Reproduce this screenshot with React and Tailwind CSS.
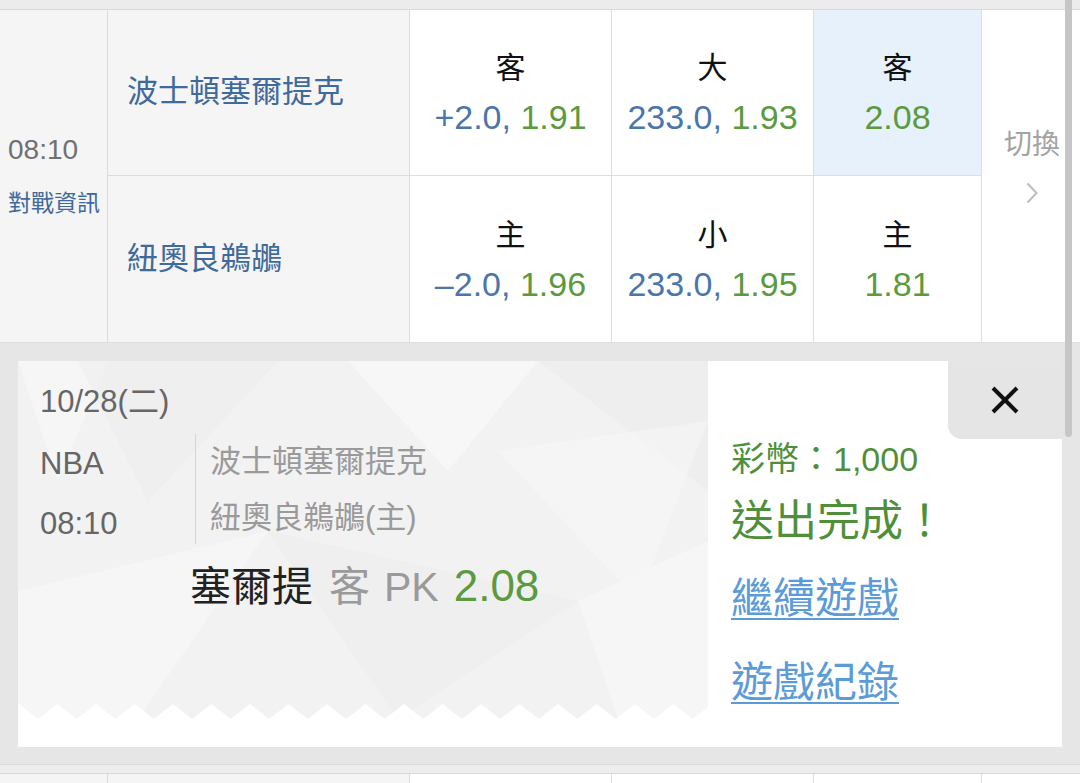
import React from 'react';

const font = "font-['Liberation_Sans','Noto_Sans_CJK_TC',sans-serif]";

const OddsCell = ({ label, line, price, highlight }) => (
  <div
    className={`flex flex-col items-center justify-center border-r border-b border-[#dedede] ${
      highlight ? 'bg-[#e6f1fb]' : 'bg-white'
    }`}
  >
    <div className="text-[30px] leading-[40px] text-[#111111]">{label}</div>
    <div className="mt-[9px] text-[34px] leading-[40px] whitespace-nowrap">
      {line && <span className="text-[#4a76ab]">{line}, </span>}
      <span className="text-[#5b9a3f]">{price}</span>
    </div>
  </div>
);

// light polygons behind the ticket
const Texture = () => (
  <svg className="absolute inset-0 w-full h-full" viewBox="0 0 690 358" preserveAspectRatio="none">
    <polygon points="0,0 90,0 40,120" fill="#ffffff" opacity="0.35" />
    <polygon points="60,0 260,0 130,140" fill="#ececec" opacity="0.5" />
    <polygon points="330,0 520,0 430,110" fill="#ffffff" opacity="0.4" />
    <polygon points="520,0 690,0 690,130" fill="#ebebeb" opacity="0.6" />
    <polygon points="0,230 250,170 120,358 0,358" fill="#ffffff" opacity="0.3" />
    <polygon points="250,170 560,240 380,358" fill="#ececec" opacity="0.5" />
    <polygon points="560,240 690,180 690,358 600,358" fill="#ffffff" opacity="0.35" />
    <polygon points="480,90 690,60 620,240" fill="#f7f7f7" opacity="0.6" />
  </svg>
);

const Zigzag = () => (
  <svg className="absolute left-0 bottom-0 w-full h-[15px]" preserveAspectRatio="none">
    <defs>
      <pattern id="zz" x="1" y="0" width="38.5" height="15" patternUnits="userSpaceOnUse">
        <polygon points="0,0 19.25,15 38.5,0 38.5,15 0,15" fill="#ffffff" />
      </pattern>
    </defs>
    <rect x="0" y="0" width="100%" height="15" fill="url(#zz)" />
  </svg>
);

const App = () => {
  return (
    <div className={`relative w-[1080px] h-[783px] overflow-hidden bg-[#e6e6e6] ${font}`}>
      <div className="h-[10px] bg-[#ececec] border-b border-[#d9d9d9]" />

      {/* match rows */}
      <div className="grid grid-cols-[108px_302px_202px_202px_168px_1fr] grid-rows-[166px_166px] bg-white">
        <div className="row-span-2 flex flex-col justify-center pl-[8px] bg-[#f5f5f5] border-r border-[#dcdcdc]">
          <div className="text-[28px] leading-[36px] text-[#707070]">08:10</div>
          <div className="mt-[17px] text-[23px] leading-[36px] text-[#3e6a9c]">對戰資訊</div>
        </div>
        <div className="flex items-center pl-[19px] bg-[#f5f5f5] border-r border-b border-[#dcdcdc] text-[31px] text-[#3e6a9c]">
          波士頓塞爾提克
        </div>
        <OddsCell label="客" line="+2.0" price="1.91" />
        <OddsCell label="大" line="233.0" price="1.93" />
        <OddsCell label="客" price="2.08" highlight />
        <div className="row-span-2 flex flex-col items-center pt-[117px] pl-[2px]">
          <div className="text-[28px] leading-[36px] text-[#a3a3a3]">切換</div>
          <svg className="mt-[19px]" width="12" height="22" viewBox="0 0 12 22">
            <polyline points="1.5,1.5 10.5,11 1.5,20.5" fill="none" stroke="#bdbdbd" strokeWidth="2" />
          </svg>
        </div>
        <div className="flex items-center pl-[19px] bg-[#f5f5f5] border-r border-[#dcdcdc] text-[31px] text-[#3e6a9c]">
          紐奧良鵜鶘
        </div>
        <div className="contents [&>div]:border-b-0">
          <OddsCell label="主" line="–2.0" price="1.96" />
          <OddsCell label="小" line="233.0" price="1.95" />
          <OddsCell label="主" price="1.81" />
        </div>
      </div>

      {/* result overlay */}
      <div className="px-[18px] pt-[18px] h-[422px] bg-[#e6e6e6] border-t border-[#dedede]">
        <div className="relative flex h-[386px] bg-white">
          <div className="relative w-[690px] h-[358px] bg-[#f2f2f2] rounded-br-[10px] overflow-hidden">
            <Texture />
            <Zigzag />
            <div className="relative pl-[22px] pt-[21px]">
              <div className="text-[31px] leading-[40px] text-[#666666]">10/28(二)</div>
              <div className="flex mt-[12px]">
                <div className="w-[155px] text-[31px] leading-[60px] text-[#666666]">
                  <div>NBA</div>
                  <div>08:10</div>
                </div>
                <div className="h-[110px] border-l border-[#d4d4d4] pl-[14px] text-[31px] leading-[56px] text-[#9a9a9a]">
                  <div>波士頓塞爾提克</div>
                  <div>紐奧良鵜鶘(主)</div>
                </div>
              </div>
              <div className="flex items-baseline mt-[7px] ml-[150px] text-[41px] leading-[50px] whitespace-nowrap">
                <span className="text-[#222222]">塞爾提</span>
                <span className="ml-[16px] text-[#9a9a9a]">客</span>
                <span className="ml-[14px] text-[#9a9a9a]">PK</span>
                <span className="ml-[15px] text-[44px] text-[#5b9a3f]">2.08</span>
              </div>
            </div>
          </div>

          <div className="flex-1 pl-[23px] pt-[76px]">
            <div className="text-[34px] leading-[44px] text-[#4f8f3a]">彩幣：1,000</div>
            <div className="mt-[12px] text-[43px] leading-[56px] text-[#4f8f3a]">送出完成！</div>
            <div className="mt-[22px] text-[42px] leading-[56px] text-[#5b9bd8] underline underline-offset-[5px] decoration-2">
              繼續遊戲
            </div>
            <div className="mt-[28px] text-[42px] leading-[56px] text-[#5b9bd8] underline underline-offset-[5px] decoration-2">
              遊戲紀錄
            </div>
          </div>

          <button className="absolute top-0 right-0 w-[114px] h-[78px] flex items-center justify-center bg-[#e5e5e5] rounded-bl-[14px]">
            <svg width="30" height="30" viewBox="0 0 30 30">
              <line x1="3" y1="3" x2="27" y2="27" stroke="#111111" strokeWidth="4" />
              <line x1="27" y1="3" x2="3" y2="27" stroke="#111111" strokeWidth="4" />
            </svg>
          </button>
        </div>
      </div>

      {/* next match row peeking */}
      <div className="h-[9px] bg-[#ededed] border-t border-[#dcdcdc]" />
      <div className="grid grid-cols-[108px_302px_202px_202px_168px_1fr] h-[20px] bg-white border-t border-[#d9d9d9]">
        <div className="bg-[#f5f5f5] border-r border-[#dcdcdc]" />
        <div className="bg-[#f5f5f5] border-r border-[#dcdcdc]" />
        <div className="border-r border-[#dedede]" />
        <div className="border-r border-[#dedede]" />
        <div className="border-r border-[#dedede]" />
        <div />
      </div>

      {/* scrollbar thumb */}
      <div className="absolute left-[1065px] top-0 w-[7px] h-[437px] rounded-b-[4px] bg-[#c6c6c6]" />
    </div>
  );
};

export default App;
